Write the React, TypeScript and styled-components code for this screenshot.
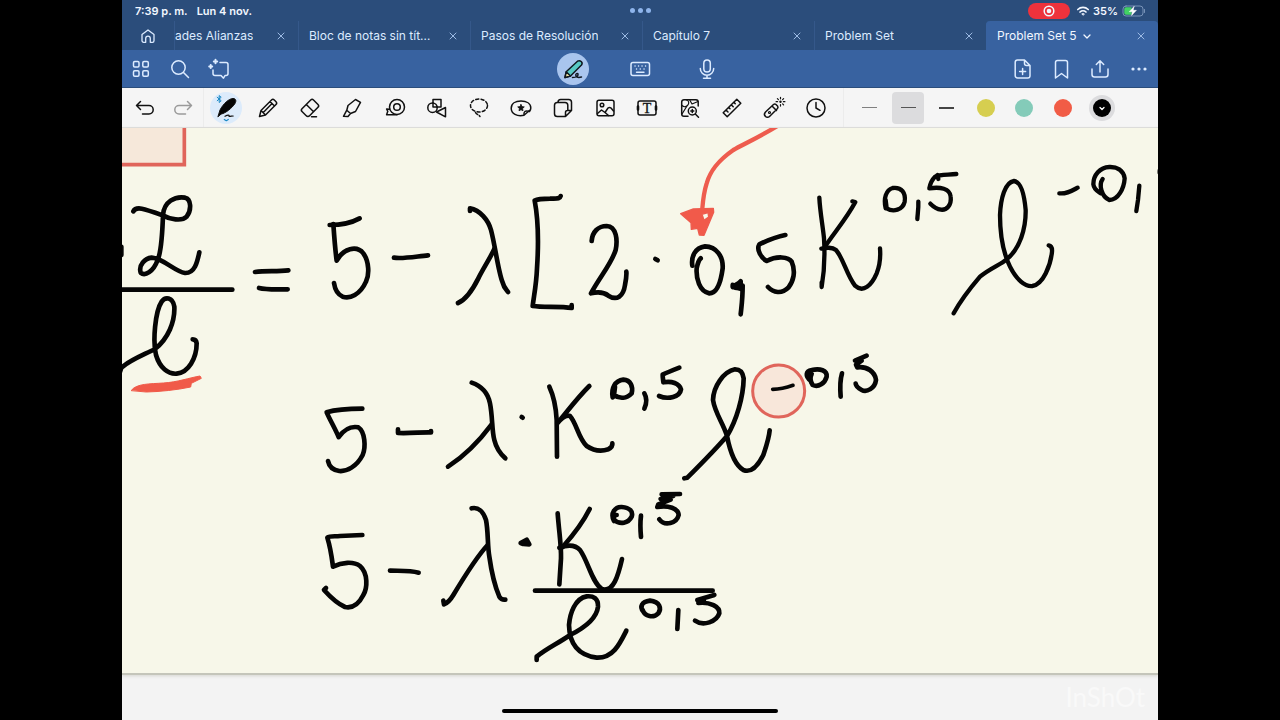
import * as React from 'react';
import {FC, ReactNode} from 'react';
import styled, {createGlobalStyle, css} from 'styled-components';


const GlobalStyle = createGlobalStyle`
	* {
		box-sizing: border-box;
	}
	body {
		margin: 0;
		background: #000;
		font-family: Inter, "Liberation Sans", sans-serif;
	}
	button {
		margin: 0;
		padding: 0;
		border: 0;
		background: none;
		color: inherit;
		font: inherit;
	}
`;

const Screen = styled.div`
	display: flex;
	flex-direction: column;
	min-height: 100vh;
	margin: 0 122px;
	overflow: hidden;
	background: #f3f3f3;
`;

const StatusBar = styled.div`
	display: grid;
	grid-template-columns: 1fr auto 1fr;
	align-items: center;
	height: 21px;
	padding: 0 13px;
	background: #2b4d7b;
	color: #f2f7ff;
	font-size: 11px;
	font-weight: 600;
	line-height: 16px;
`;
const StatusGroup = styled.div<{$end?: boolean}>`
	display: flex;
	align-items: center;
	gap: ${({$end}) => $end ? 4 : 9}px;
	justify-content: ${({$end}) => $end ? 'flex-end' : 'flex-start'};
`;
const Multitask = styled.button`
	display: flex;
	gap: 3px;
`;
const MultitaskDot = styled.span`
	width: 5px;
	height: 5px;
	border-radius: 50%;
	background: #8fb5ec;
`;
const RecordPill = styled.span`
	display: flex;
	align-items: center;
	justify-content: center;
	width: 42px;
	height: 16px;
	margin-right: 3px;
	border-radius: 8px;
	background: #ee323c;
`;

const TabBar = styled.nav`
	display: flex;
	height: 29px;
	background: #2b4d7b;
	color: #dcebff;
`;
const HomeButton = styled.button`
	display: flex;
	flex: 0 0 52px;
	align-items: center;
	justify-content: center;
`;
const TabElement = styled.div<{$active?: boolean; $cut?: boolean}>`
	display: flex;
	flex: 1 1 0;
	align-items: center;
	min-width: 0;
	padding: 0 11px 0 10px;
	border-left: 1px solid #35588a;
	font-size: 12px;
	line-height: 16px;
	${({$cut}) => $cut && css`
		flex: 0 0 124px;
		padding-left: 0;
	`}
	${({$active}) => $active && css`
		border-color: #3862a0;
		border-radius: 4px 4px 0 0;
		background: #3862a0;
		color: #f2f7ff;
	`}
`;
const TabTitle = styled.a`
	overflow: hidden;
	color: inherit;
	text-decoration: none;
	white-space: nowrap;
`;
const TabClose = styled.button`
	display: flex;
	margin-left: auto;
	color: #9dbbe4;
`;

const NavBar = styled.div`
	display: grid;
	grid-template-columns: 1fr auto 1fr;
	align-items: center;
	height: 38px;
	border-bottom: 1px solid #2b4d7b;
	background: #3862a0;
	color: #dcebff;
`;
const NavGroup = styled.div<{$place?: 'center' | 'end'}>`
	display: flex;
	align-items: center;
	gap: ${({$place}) => $place === 'center' ? 35 : 1}px;
	justify-content: ${({$place}) => $place === 'end' ? 'flex-end' : 'flex-start'};
`;
const NavButton = styled.button<{$round?: boolean; $active?: boolean}>`
	display: flex;
	align-items: center;
	justify-content: center;
	width: ${({$round}) => $round ? 32 : 38}px;
	height: 32px;
	border-radius: 50%;
	background: ${({$active}) => $active ? '#a9c5ee' : 'none'};
`;

const ToolBar = styled.div`
	display: flex;
	align-items: center;
	height: 40px;
	padding: 0 37px 0 4px;
	border-bottom: 1px solid #dededc;
	background: #f5f5f5;
	color: #111;
`;
const ToolGroup = styled.div<{$width?: number}>`
	display: flex;
	flex: ${({$width}) => $width ? `0 0 ${$width}px` : '1 1 0'};
`;
const ToolSeparator = styled.span`
	width: 1px;
	height: 39px;
	margin: 0 1px;
	background: #ececec;
	&:last-of-type {
		margin: 0 6px;
	}
`;
const ToolButton = styled.button<{$muted?: boolean}>`
	display: flex;
	flex: 1 1 0;
	align-items: center;
	justify-content: center;
	height: 32px;
	color: ${({$muted}) => $muted ? '#9a9a9a' : 'inherit'};
`;
const ToolFace = styled.span<{$tint?: string; $round?: boolean}>`
	display: flex;
	flex: none;
	align-items: center;
	justify-content: center;
	width: 32px;
	height: 32px;
	border-radius: ${({$round}) => $round ? '50%' : '4px'};
	background: ${({$tint}) => $tint || 'none'};
`;
const StrokeSample = styled.span<{$weight: number; $color: string}>`
	width: 15px;
	height: ${({$weight}) => $weight}px;
	background: ${({$color}) => $color};
`;
const Swatch = styled.span<{$color: string; $active?: boolean}>`
	display: flex;
	align-items: center;
	justify-content: center;
	width: 18px;
	height: 18px;
	border-radius: 50%;
	background: ${({$color}) => $color};
	box-shadow: ${({$active}) => $active ? '0 0 0 4px #dcdcde' : 'none'};
	color: #fff;
`;

const Page = styled.main`
	background: #f7f7e9;
	border-bottom: 2px solid #c4c5ba;
	box-shadow: 0 1px 3px #d5d5d0;
`;
const InkLayer = styled.svg`
	display: block;
	width: 100%;
	fill: none;
	stroke: #050505;
	stroke-linecap: round;
	stroke-linejoin: round;
`;

const Footer = styled.footer`
	display: grid;
	flex: 1 0 auto;
	grid-template-columns: 1fr 276px 1fr;
	align-items: end;
	padding: 8px 13px 7px;
`;
const HomeIndicator = styled.span`
	grid-column: 2;
	height: 4px;
	border-radius: 2px;
	background: #000;
`;
const Watermark = styled.span`
	align-self: start;
	justify-self: end;
	color: #f9f9f9;
	font-family: Lato, sans-serif;
	font-size: 26px;
	line-height: 28px;
`;

const IconElement = styled.svg`
	display: block;
	flex: none;
	overflow: visible;
	fill: none;
	stroke: currentColor;
	stroke-width: 1.5;
	stroke-linecap: round;
	stroke-linejoin: round;
`;
const Icon: FC<{size?: number; children: ReactNode}> = ({size = 24, children}) => (
	<IconElement width={size} height={size} viewBox={`0 0 ${size} ${size}`} aria-hidden="true">
		{children}
	</IconElement>
);

const toolIcons: {[name: string]: ReactNode} = {
	'Deshacer': <path d="M7.500 5.500l-4 4 4 4M3.500 9.500H16a4.200 4.200 0 0 1 0 8.400H9.500" />,
	'Rehacer': <path d="M16.500 5.500l4 4-4 4M20.500 9.500H8a4.200 4.200 0 0 0 0 8.400h6.500" />,
	'Pluma': (
		<>
			<path d="M4 20.500 6 14C9 8 15 2.500 19 2.500c3 0 3.500 2.500 2 5C18 12 12 17 7.500 18Z" fill="#050505" strokeWidth="1" />
			<path d="M11 20.300c1.500-.8 3.200-1.300 4-1 .4.500-.4 1 .2 1.100 1 .1 2.800-.4 4-.4" strokeWidth="1.200" />
			<path d="M3.200 1.300l4 3.400-2 1.800V-.4l2 1.700-4 3.400" stroke="#1787c4" strokeWidth="1" />
			<path d="M10.300 23.500l2 1.200 2-1.200" stroke="#1787c4" strokeWidth="1.200" />
		</>
	),
	'Lápiz': <path d="M3.500 20.500 5 14.500 15.500 4a2 2 0 0 1 2.800 0l1.700 1.700a2 2 0 0 1 0 2.800L9.500 19ZM14 5.500l4.500 4.500M5 14.500 9.500 19M15.800 7.800 7.300 16.500" />,
	'Borrador': <path d="M8 19.500l-4-4a2 2 0 0 1 0-2.800L12.700 4a2 2 0 0 1 2.800 0l4.500 4.500a2 2 0 0 1 0 2.800l-8.200 8.200a2.700 2.700 0 0 1-3.800 0ZM8.300 8.500l7.300 7.300M13.500 20.700h5" />,
	'Marcador': <path d="M15.500 3.500 20.500 6.300 15.500 15.500 10.500 17.500 6.800 14.200 8 9.500ZM6.800 14.200 3.500 20.300 8 20.500l2.500-3" />,
	'Cinta': (
		<>
			<circle cx="14" cy="11" r="7.500" />
			<circle cx="14" cy="11" r="3.300" />
			<path d="M6.700 13.200 3.600 13l1.200 2.300-1.200 3.400H14" />
		</>
	),
	'Formas': (
		<>
			<path d="M8 7V3.500h8V11h-4" />
			<circle cx="7.500" cy="11.700" r="4.700" />
			<path d="M8 7v4h4M20.500 11.500v9.300L11.500 16Z" />
		</>
	),
	'Lazo': (
		<>
			<ellipse cx="12" cy="9.500" rx="8.500" ry="6.500" strokeDasharray="3 2.300" />
			<path d="M8.500 16.500c1 2 2.500 1.500 4.500 4" strokeDasharray="3 2" />
		</>
	),
	'Pegatinas': (
		<>
			<path d="M15 19.200C8 20.800 2.200 17.500 2.200 12.200 2.200 7.500 6.500 5 12 5s9.800 2.500 9.800 7c0 1.700-.5 2.500-1.300 3.500M15 19.200c-.5-3.500 1-5.200 5.500-3.700M15 19.200l6-5.200" />
			<path d="M12 8.500l1 2.100 2.300.3-1.700 1.600.4 2.300-2-1.100-2 1.100.4-2.300-1.700-1.600 2.300-.3Z" fill="#111" strokeWidth=".8" />
		</>
	),
	'Páginas': <path d="M7 6.300a2.800 2.800 0 0 1 2.700-2.800h8a2.800 2.800 0 0 1 2.800 2.800v8.200l-6 6H6.300a2.800 2.800 0 0 1-2.800-2.800V9.300a2.800 2.800 0 0 1 2.800-2.800h7.700a2.800 2.800 0 0 1 2.800 2.800v4.500M14.500 20.500v-4a2 2 0 0 1 2-2h4" />,
	'Imagen': (
		<>
			<rect x="4" y="4.200" width="17" height="15.500" rx="2" />
			<circle cx="9" cy="9" r="1.800" />
			<path d="M4.500 17.500l4-3.500 3.500 2.500 3-4.500q1.500-1.200 3 0l2.500 3M12 16.500l3.500 3" />
		</>
	),
	'Texto': (
		<>
			<rect x="3" y="5" width="18" height="14" rx="2" />
			<path d="M3 10.500v3M21 10.500v3" strokeWidth="2.600" />
			<text x="12" y="16.500" textAnchor="middle" fontFamily="Liberation Serif, serif" fontSize="14" fill="#111" stroke="#111" strokeWidth=".3">T</text>
		</>
	),
	'Buscar imagen': (
		<>
			<path d="M20.200 10V6a2.300 2.300 0 0 0-2.300-2.300H6A2.300 2.300 0 0 0 3.700 6v12A2.300 2.300 0 0 0 6 20.300h4" />
			<path d="M8.500 4c2.500.5 3 3.500 1 5.500-1.500 1.500-4 1.500-5.500 0M12 4.500l2 3.500 6-2.500M4 18l5-8" strokeWidth="1.200" />
			<circle cx="14.300" cy="15" r="4" />
			<path d="M17.300 18l3.200 3.200M14.300 13.500v3M12.800 15h3" />
		</>
	),
	'Regla': <path d="M3.200 16.800 16.800 3.200l4 4L7.200 20.800ZM6 14l2 2M8.600 11.400l1.400 1.400M11.200 8.800l2 2M13.800 6.200l1.400 1.400" />,
	'Láser': (
		<>
			<path d="M3.500 16 11.500 8.500a2 2 0 0 1 2.500 0l1.500 1.500a2 2 0 0 1 0 2.500l-8 8a2.800 2.800 0 0 1-4 0 3.200 3.200 0 0 1 0-4.500ZM10 10l4.500 4.500" />
			<circle cx="7.500" cy="16.500" r="1" strokeWidth="1.200" />
			<path d="M18.500 1.300v1.500M18.500 8.600v1.500M14.100 5.700h1.500M21.400 5.700h1.500M15.400 2.600l1 1M20.600 7.800l1 1M21.600 2.600l-1 1" strokeWidth="1.200" />
			<circle cx="18.500" cy="5.700" r="1.200" fill="#111" stroke="none" />
		</>
	),
	'Temporizador': (
		<>
			<circle cx="12" cy="12" r="9" />
			<path d="M12 6.500V12l4 2.300" />
		</>
	),
};
const tools = Object.keys(toolIcons);

const navLeft: [string, ReactNode][] = [
	['Miniaturas', (
		<>
			<rect x="4.500" y="4.500" width="5.500" height="5.500" rx="1.200" />
			<rect x="13.800" y="4.500" width="5.500" height="5.500" rx="1.200" />
			<rect x="4.500" y="13.800" width="5.500" height="5.500" rx="1.200" />
			<rect x="13.800" y="13.800" width="5.500" height="5.500" rx="1.200" />
		</>
	)],
	['Buscar', (
		<>
			<circle cx="10.500" cy="10.500" r="6.700" />
			<path d="M15.500 15.500l5 5" />
		</>
	)],
	['Asistente', (
		<>
			<path d="M13 5.500h6a2 2 0 0 1 2 2v9a2 2 0 0 1-2 2h-1l-1.500 2.700-2.500-2.700H8a2 2 0 0 1-2-2V13" />
			<path d="M8.500 2.800v3.400M6.800 4.500h3.400M3.700 8v3M2.200 9.500h3" strokeWidth="2" />
		</>
	)],
];
const navCenter: [string, ReactNode][] = [
	['Escribir', (
		<>
			<path d="M4 20.500l1.200-5.700L16.500 4.200q2-1.200 3.700.3t.3 3.500L9.500 19Z" fill="#57c9c4" stroke="#101820" />
			<path d="M4 20.500l1.200-5.700L9.500 19Z" fill="#e8dfa0" stroke="#101820" />
			<path d="M11.500 20.500c4 0 6-1.500 5.500-3.500-.8-1.300-3 0-2 2 1 1.700 3 1.700 5.500 1" stroke="#101820" />
		</>
	)],
	['Teclado', (
		<>
			<rect x="3" y="5.500" width="18.500" height="13" rx="2" />
			<path d="M7 9h.1M10.500 9h.1M14 9h.1M17.500 9h.1M8.500 12h.1M12.200 12h.1M16 12h.1M8.500 15.300h7.500" strokeWidth="1.400" />
		</>
	)],
	['Micrófono', (
		<>
			<rect x="8.800" y="3" width="6.500" height="12" rx="3.250" />
			<path d="M5.300 11.500a6.700 6.700 0 0 0 13.400 0M12 18.300v3M8.500 21.300h7" />
		</>
	)],
];
const navRight: [string, ReactNode][] = [
	['Añadir página', <path d="M14.500 3H7.500A2.300 2.300 0 0 0 5.200 5.300v13.400A2.300 2.300 0 0 0 7.500 21h10.200a2.300 2.300 0 0 0 2.300-2.300V8.500ZM14.500 3v3.500a2 2 0 0 0 2 2H20M12.600 11.500v6M9.600 14.500h6" />],
	['Marcar página', <path d="M6.500 21V5.500a2 2 0 0 1 2-2h8a2 2 0 0 1 2 2V21l-6-4.500Z" />],
	['Compartir', <path d="M12 15V4M8.300 7.500 12 3.800l3.700 3.700M4 12v5.500a2.500 2.500 0 0 0 2.500 2.500h11a2.500 2.500 0 0 0 2.500-2.500V12" />],
	['Más', (
		<g fill="currentColor" stroke="none">
			<circle cx="6" cy="12" r="1.600" />
			<circle cx="12" cy="12" r="1.600" />
			<circle cx="18" cy="12" r="1.600" />
		</g>
	)],
];

interface ITab {
	title: string;
	active?: boolean;
	cut?: boolean;
}
const tabs: ITab[] = [
	{title: 'ades Alianzas', cut: true},
	{title: 'Bloc de notas sin tít…'},
	{title: 'Pasos de Resolución'},
	{title: 'Capítulo 7'},
	{title: 'Problem Set'},
	{title: 'Problem Set 5', active: true},
];

const weights = [
	{label: 'Trazo fino', weight: 1, color: '#808080'},
	{label: 'Trazo medio', weight: 1, color: '#555', active: true},
	{label: 'Trazo grueso', weight: 2, color: '#444'},
];
const colors = [
	{label: 'Amarillo', color: '#d6ce50'},
	{label: 'Turquesa', color: '#84cbb9'},
	{label: 'Rojo', color: '#f15c46'},
	{label: 'Negro', color: '#000', active: true},
];

// Pen strokes, three units to a pixel, grouped by where the writing started
interface IInk {
	x: number;
	y: number;
	strokes: string[];
	width?: number;
}
const ink: IInk[] = [
	{x: 360, y: 375, strokes: [
		'M40 259C48 243 70 250 128 271C150 283 185 290 200 275C215 255 214 222 195 218C165 213 132 230 129 270C127 330 124 380 113 405C100 440 75 455 62 443C55 420 75 400 95 398C130 400 165 440 195 444C225 445 232 410 238 382',
		'M4 365V390',
		'M0 494H337',
		'M0 740L4 728C30 705 70 690 105 672C145 640 165 590 163 545C158 515 135 515 125 530C105 560 98 650 108 690C120 730 145 748 170 746C205 743 230 700 230 655C229 645 224 643 218 643',
		'M405 441C440 437 470 440 505 436',
		'M417 489C440 495 470 493 503 493',
		'M629 300C660 300 690 296 719 280',
		'M640 297C643 340 645 370 650 407C670 370 710 360 730 385C748 410 748 450 738 470C720 510 690 522 668 515C652 508 645 495 642 474',
		'M822 398C850 402 890 394 924 391',
	]},
	{x: 1290, y: 375, strokes: [
		'M120 258V250C150 255 175 285 183 315C195 360 205 440 217 470C222 490 230 495 234 501',
		'M194 370C180 400 160 430 145 460C125 500 105 525 84 534',
		'M392 213C390 222 380 220 360 221C340 221 325 221 314 227C328 300 325 370 321 430C319 480 312 510 308 543C340 548 390 543 425 549V540',
		'M485 348C487 320 505 303 530 303C560 305 563 345 557 375C545 415 510 455 483 505C505 500 520 500 535 512C560 528 580 515 585 480C588 465 590 450 589 440',
		'M676 402l7 4',
		'M787 422C783 395 795 368 825 364C860 365 880 395 878 430C872 475 860 505 838 505C808 500 798 460 800 430C803 415 806 405 812 400',
		'M908 486C915 480 925 477 932 469V490L915 488L938 482C938 520 935 540 932 568',
		'M1066 330C1040 335 1015 345 988 358C978 375 995 400 1010 408C1040 392 1075 395 1085 410C1098 440 1090 470 1075 488C1055 508 1030 503 1014 486',
		'M908 480L935 492',
	]},
	{x: 2340, y: 375, width: 13, strokes: [
		'M118 218C120 260 128 300 132 340C135 390 133 440 125 486V472',
		'M217 229L226 231C200 280 165 320 135 365',
		'M124 371C140 368 155 365 168 375C190 400 200 450 225 482C250 505 275 480 290 445C300 420 302 395 300 370',
		'M317 250C310 220 318 195 338 189C365 185 378 205 374 230C368 255 340 262 320 250L317 225',
		'M415 230C416 250 413 265 412 282',
		'M529 147C505 150 480 148 465 155C455 165 450 178 448 190C480 185 510 190 512 215C515 240 500 256 483 254C468 252 458 243 451 236',
		'M472 150l3 12',
		'M521 565C540 530 570 490 600 455C630 430 660 420 680 403C720 370 738 310 737 255C732 200 720 170 702 168C675 172 662 220 660 270C660 330 668 380 690 425C710 465 735 485 757 483C790 478 812 420 816 380C817 368 812 362 806 361',
		'M838 205C860 208 880 195 893 188',
		'M968 162C955 180 965 215 988 225C1015 225 1032 190 1034 160C1030 135 1010 125 988 126C960 127 940 150 940 178C942 195 955 200 962 205',
		'M1078 182L1074 225L1069 258',
		'M1139 137v6',
	]},
	{x: 930, y: 1020, strokes: [
		'M157 206C120 206 80 208 50 217C60 240 75 265 86 291C105 265 125 258 145 262C165 275 168 320 158 345C140 380 110 395 88 393C68 390 57 378 54 363',
		'M264 268V279C300 281 335 276 363 277V273',
		'M485 128C520 140 535 165 540 190C548 230 545 270 553 300C560 330 575 345 586 355',
		'M545 253C510 300 460 350 414 380',
		'M635 231l3 2',
		'M718 140C732 170 738 200 740 240L741 350',
		'M838 138C805 170 775 210 742 250C750 240 765 222 780 228C800 250 805 295 830 318C855 335 880 333 895 328C905 322 908 316 907 310',
	]},
	{x: 1800, y: 1020, strokes: [
		'M38 172C33 145 45 122 70 119C92 120 100 140 95 160C80 175 60 178 42 165L45 140L38 160',
		'M133 160C142 175 140 190 133 206',
		'M238 83C220 90 200 98 188 104C188 115 190 122 190 127C215 122 238 130 243 148C240 170 205 180 177 168',
		'M253 415L262 413C300 375 345 330 381 288C410 240 430 170 431 115C428 95 420 88 405 88C370 95 340 140 339 180C345 220 370 250 381 288C390 335 405 375 430 390C455 400 475 375 490 345C500 315 507 295 509 271',
		'M632 122C615 110 617 92 635 90C660 85 682 90 680 110C675 130 655 143 638 135C630 125 630 110 635 102',
		'M726 100C720 120 720 145 722 170',
		'M800 47L765 62L785 62L768 74L772 82C800 78 825 95 828 120C825 145 800 158 785 150C775 145 768 137 767 131',
	]},
	{x: 930, y: 1455, strokes: [
		'M157 150L90 153C75 155 60 152 52 158C62 190 65 215 69 245C95 232 130 228 150 243C175 265 172 310 160 330C145 360 125 370 105 366C80 355 60 335 42 315L48 309',
		'M240 257C270 258 300 256 326 263',
		'M485 70C505 65 520 80 528 105C535 140 532 180 538 215C545 265 555 305 568 335C575 346 580 344 586 344',
		'M533 180C500 215 460 280 430 330C418 350 410 355 402 358L400 347',
		'M632 174L650 164L658 178L640 177Z',
		'M743 85C748 150 754 180 753 220L748 298',
		'M839 72C820 110 790 150 758 186',
		'M748 188C770 180 795 178 810 195C835 230 845 290 875 312C910 325 925 270 936 222',
		'M912 108C900 85 915 65 935 66C960 68 970 80 965 95C955 115 930 120 912 105V90L920 90',
		'M993 92C990 115 991 135 993 156',
		'M1110 27L1055 28L1090 33L1052 42L1082 44L1045 58L1042 66C1075 60 1105 70 1106 90C1100 115 1065 125 1048 103',
		'M675 317H1208',
		'M680 525V515C710 490 745 475 780 450C820 430 860 400 864 365C865 340 850 332 830 334C795 340 780 385 777 420C778 470 800 510 860 518C910 520 930 475 949 437',
		'M1000 380C988 365 995 350 1020 347C1050 350 1055 370 1045 385C1030 400 1005 395 998 375',
		'M1105 375L1102 432',
		'M1213 330L1162 345L1182 344L1165 354C1200 350 1230 365 1228 385C1220 410 1180 425 1155 407',
	]},
];

const Tab: FC<{tab: ITab}> = ({tab}) => (
	<TabElement $active={tab.active} $cut={tab.cut}>
		<TabTitle href="#" aria-current={tab.active ? 'page' : undefined}>{tab.title}</TabTitle>
		{tab.active && (
			<Icon size={18}><path d="M7 8l3 3 3-3" strokeWidth="1.300" /></Icon>
		)}
		<TabClose aria-label="Cerrar">
			<Icon size={12}><path d="M3 3l6 6M9 3l-6 6" strokeWidth="1" /></Icon>
		</TabClose>
	</TabElement>
);

const Tool: FC<{name: string}> = ({name}) => {
	const active = name === 'Pluma';
	return (
		<ToolButton aria-label={name} aria-pressed={active} $muted={name === 'Rehacer'}>
			<ToolFace $round $tint={active ? '#dcebfb' : undefined}>
				<Icon>{toolIcons[name]}</Icon>
			</ToolFace>
		</ToolButton>
	);
}

const Ink: FC = () => (
	<InkLayer viewBox="366 384 3108 1635" role="img" aria-label="Notas manuscritas">
		<g transform="translate(360 375)">
			<path d="M-20-20H193V119H-20Z" fill="#f6e8da" stroke="#e0655b" strokeWidth="11" strokeLinejoin="miter" />
			<path d="M34 796C50 775 90 777 130 774C170 772 210 758 240 753L244 760L214 775L212 786C170 795 120 800 80 801Z" fill="#f05a49" stroke="#f05a49" strokeWidth="3" />
		</g>
		<g transform="translate(1290 375)" stroke="#ee5c4e">
			<path d="M1050-2C1000 30 940 58 910 75C860 110 840 140 830 175C822 200 819 225 817 250" strokeWidth="13" />
			<path d="M752 266L790 252L850 250L851 262L822 331L808 330L803 310L784 313L783 293Z M816 268L834 263L836 276L822 286Z" fill="#f15a4a" fillRule="evenodd" strokeWidth="4" />
		</g>
		<circle cx="2336" cy="1173" r="78" fill="#f8e7da" stroke="#e0655b" strokeWidth="9" />
		<path d="M2318 1168C2340 1168 2360 1163 2379 1156" strokeWidth="11" />
		{ink.map(({x, y, strokes, width}) => (
			<g key={`${x}-${y}`} transform={`translate(${x} ${y})`} strokeWidth={width || 14}>
				{strokes.map((d) => <path key={d} d={d} />)}
			</g>
		))}
	</InkLayer>
);

const App: FC = () => (
	<>
		<GlobalStyle />
		<Screen>
			<StatusBar>
				<StatusGroup>
					<span>7:39 p. m.</span>
					<span>Lun 4 nov.</span>
				</StatusGroup>
				<Multitask aria-label="Multitarea">
					<MultitaskDot />
					<MultitaskDot />
					<MultitaskDot />
				</Multitask>
				<StatusGroup $end>
					<RecordPill>
						<Icon size={12}>
							<circle cx="6" cy="6" r="4.800" />
							<circle cx="6" cy="6" r="2.300" fill="currentColor" stroke="none" />
						</Icon>
					</RecordPill>
					<Icon size={12}>
						<path d="M.8 4.500a7.500 7.500 0 0 1 10.400 0M3 7a4.400 4.400 0 0 1 6 0" strokeWidth="1.700" />
						<path d="M6 10.200L4.600 8.900a2 2 0 0 1 2.800 0Z" fill="currentColor" strokeWidth=".5" />
					</Icon>
					<span>35%</span>
					<IconElement width="23" height="12" viewBox="0 0 23 12" aria-hidden="true">
						<rect x="1" y="1" width="20" height="10" rx="3" stroke="#7893b8" strokeWidth="1" />
						<path d="M22.500 4.500v3" stroke="#7893b8" strokeWidth="1" />
						<path d="M4 2.300h5.500v7.400H4a1.700 1.700 0 0 1-1.700-1.700V4A1.700 1.700 0 0 1 4 2.300Z" fill="#42d264" stroke="none" />
						<path d="M12 1.500L7.300 6.700h3L9.600 10.500l4.800-5.200h-3.100Z" fill="#fff" stroke="#fff" strokeWidth=".5" />
					</IconElement>
				</StatusGroup>
			</StatusBar>
			<TabBar>
				<HomeButton aria-label="Inicio">
					<Icon>
						<path d="M6 10.500 12 6l6 4.500V16.700a1.600 1.600 0 0 1-1.600 1.600H14.300V14.500a2.300 2.300 0 0 0-4.600 0v3.800H7.600A1.600 1.600 0 0 1 6 16.700Z" strokeWidth="1.300" />
					</Icon>
				</HomeButton>
				{tabs.map((tab) => <Tab key={tab.title} tab={tab} />)}
			</TabBar>
			<NavBar>
				<NavGroup>
					{navLeft.map(([name, icon]) => (
						<NavButton key={name} aria-label={name}><Icon>{icon}</Icon></NavButton>
					))}
				</NavGroup>
				<NavGroup $place="center">
					{navCenter.map(([name, icon], index) => (
						<NavButton key={name} aria-label={name} $round $active={index === 0}><Icon>{icon}</Icon></NavButton>
					))}
				</NavGroup>
				<NavGroup $place="end">
					{navRight.map(([name, icon]) => (
						<NavButton key={name} aria-label={name}><Icon>{icon}</Icon></NavButton>
					))}
				</NavGroup>
			</NavBar>
			<ToolBar>
				<ToolGroup $width={76}>
					{tools.slice(0, 2).map((name) => <Tool key={name} name={name} />)}
				</ToolGroup>
				<ToolSeparator />
				<ToolGroup>
					{tools.slice(2).map((name) => <Tool key={name} name={name} />)}
				</ToolGroup>
				<ToolSeparator />
				<ToolGroup $width={271}>
					{weights.map(({label, weight, color, active}) => (
						<ToolButton key={label} aria-label={label} aria-pressed={!!active}>
							<ToolFace $tint={active ? '#dcdcde' : undefined}>
								<StrokeSample $weight={weight} $color={color} />
							</ToolFace>
						</ToolButton>
					))}
					{colors.map(({label, color, active}) => (
						<ToolButton key={label} aria-label={label} aria-pressed={!!active}>
							<Swatch $color={color} $active={active}>
								{active && <Icon size={12}><path d="M4 5.500l2 2 2-2" strokeWidth="1.300" /></Icon>}
							</Swatch>
						</ToolButton>
					))}
				</ToolGroup>
			</ToolBar>
			<Page>
				<Ink />
			</Page>
			<Footer>
				<HomeIndicator />
				<Watermark>InShOt</Watermark>
			</Footer>
		</Screen>
	</>
);

export default App;
